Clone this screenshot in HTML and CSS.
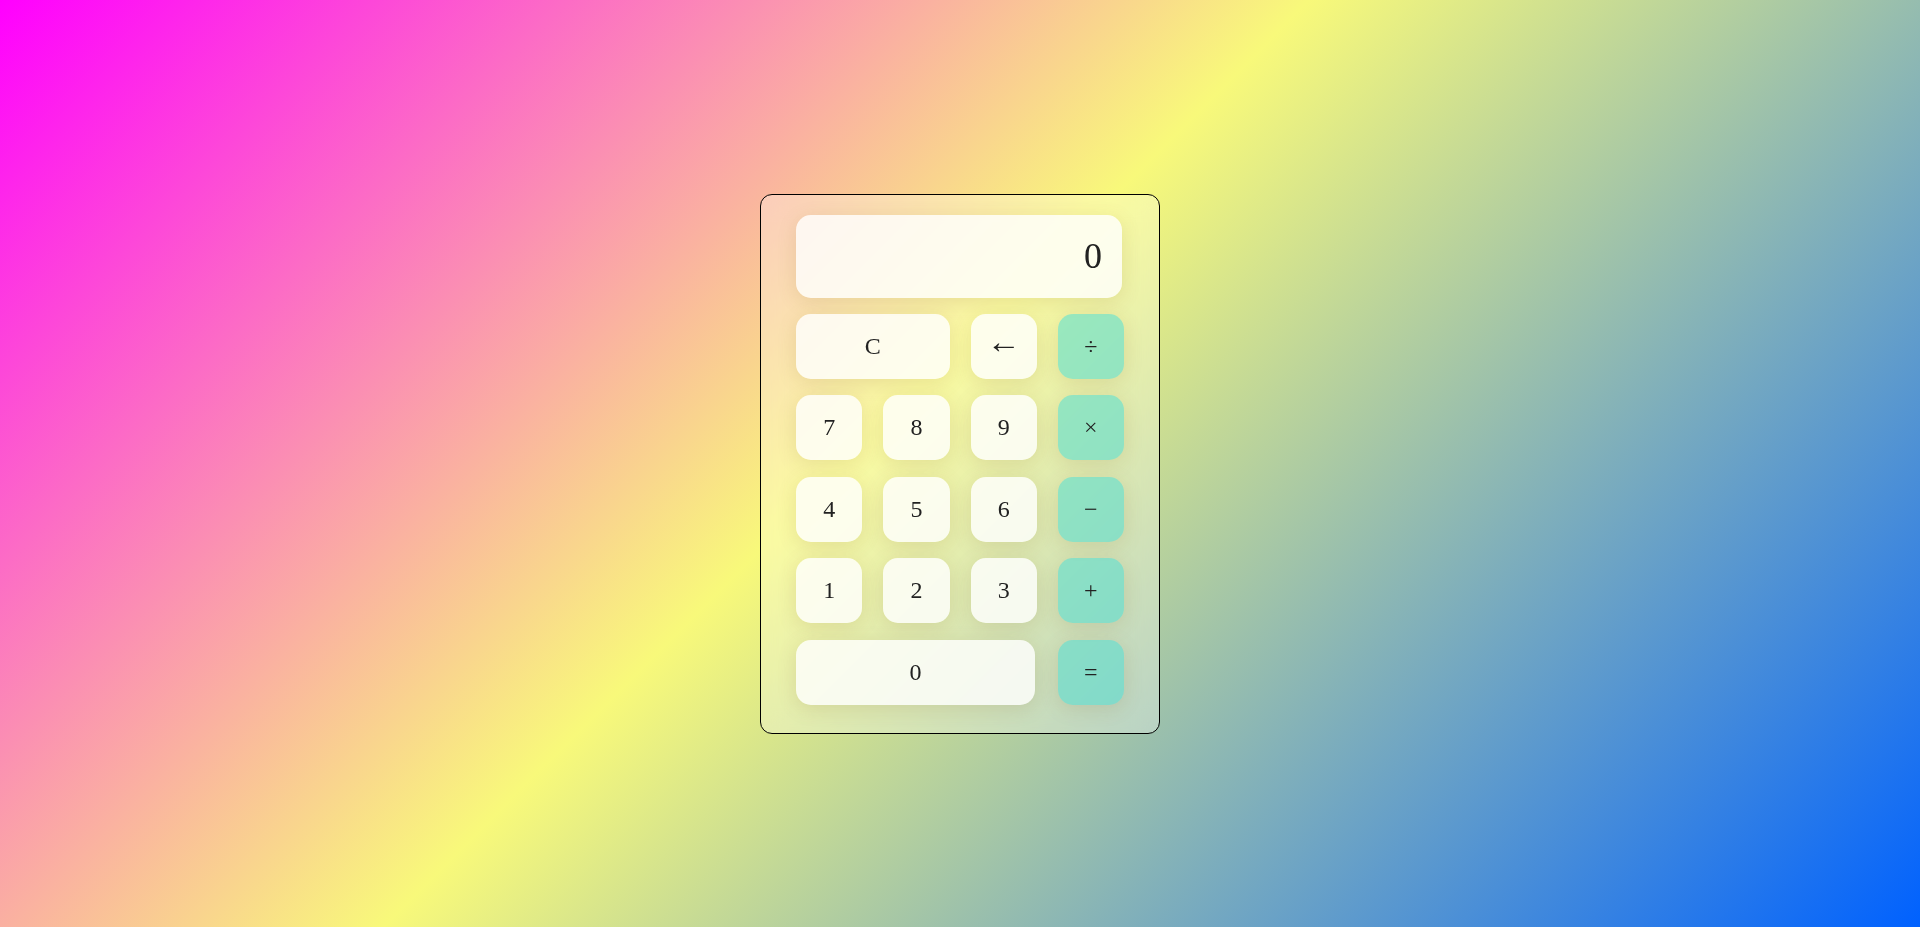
FILE: index.html
```html
<!DOCTYPE html>
<html lang="en">
<head>
<meta charset="utf-8">
<title>Calculator</title>
<link rel="stylesheet" href="styles.css">
</head>
<body>
  <main class="page">
    <div class="calculator">
      <div class="display">0</div>
      <div class="keys">
        <button class="key wide">C</button>
        <button class="key arrow">←</button>
        <button class="key op">÷</button>
        <button class="key">7</button>
        <button class="key">8</button>
        <button class="key">9</button>
        <button class="key op">×</button>
        <button class="key">4</button>
        <button class="key">5</button>
        <button class="key">6</button>
        <button class="key op">−</button>
        <button class="key">1</button>
        <button class="key">2</button>
        <button class="key">3</button>
        <button class="key op">+</button>
        <button class="key zero">0</button>
        <button class="key op">=</button>
      </div>
    </div>
  </main>
</body>
</html>
```

FILE: styles.css
```css
* { box-sizing: border-box; }

html, body {
  margin: 0;
  height: 100%;
}

body {
  background: linear-gradient(135deg, #ff00ff 0%, #f8f97a 46%, #0061ff 100%);
  font-family: "Liberation Serif", "Times New Roman", serif;
  color: #222;
  overflow: hidden;
}

.page {
  height: 100%;
  display: flex;
  align-items: center;
  justify-content: center;
}

.calculator {
  width: 400px;
  padding: 20px 35px 28px;
  border: 1px solid #000;
  border-radius: 12px;
  background: rgba(255, 255, 255, 0.3);
  backdrop-filter: blur(12px);
  -webkit-backdrop-filter: blur(12px);
}

.display {
  height: 83px;
  width: 326px;
  border-radius: 15px;
  background: rgba(255, 255, 255, 0.8);
  box-shadow: 0 4px 20px rgba(120, 80, 30, 0.14);
  display: flex;
  align-items: center;
  justify-content: flex-end;
  padding-right: 20px;
  font-size: 36px;
  color: #222;
  margin-bottom: 16px;
}

.keys {
  display: grid;
  grid-template-columns: repeat(4, 1fr);
  column-gap: 21px;
  row-gap: 16.5px;
}

.key {
  height: 65px;
  border: none;
  border-radius: 15px;
  background: rgba(255, 255, 255, 0.8);
  box-shadow: 0 4px 20px rgba(120, 80, 30, 0.14);
  font-family: "Liberation Serif", "Times New Roman", serif;
  font-size: 24px;
  color: #222;
  padding: 0;
  cursor: pointer;
}

.key.wide { grid-column: span 2; }
.key.zero { grid-column: span 3; margin-right: 2px; }
.key.arrow { font-size: 34px; padding-bottom: 9px; }

.key.op {
  background: rgba(80, 220, 210, 0.55);
}
```
